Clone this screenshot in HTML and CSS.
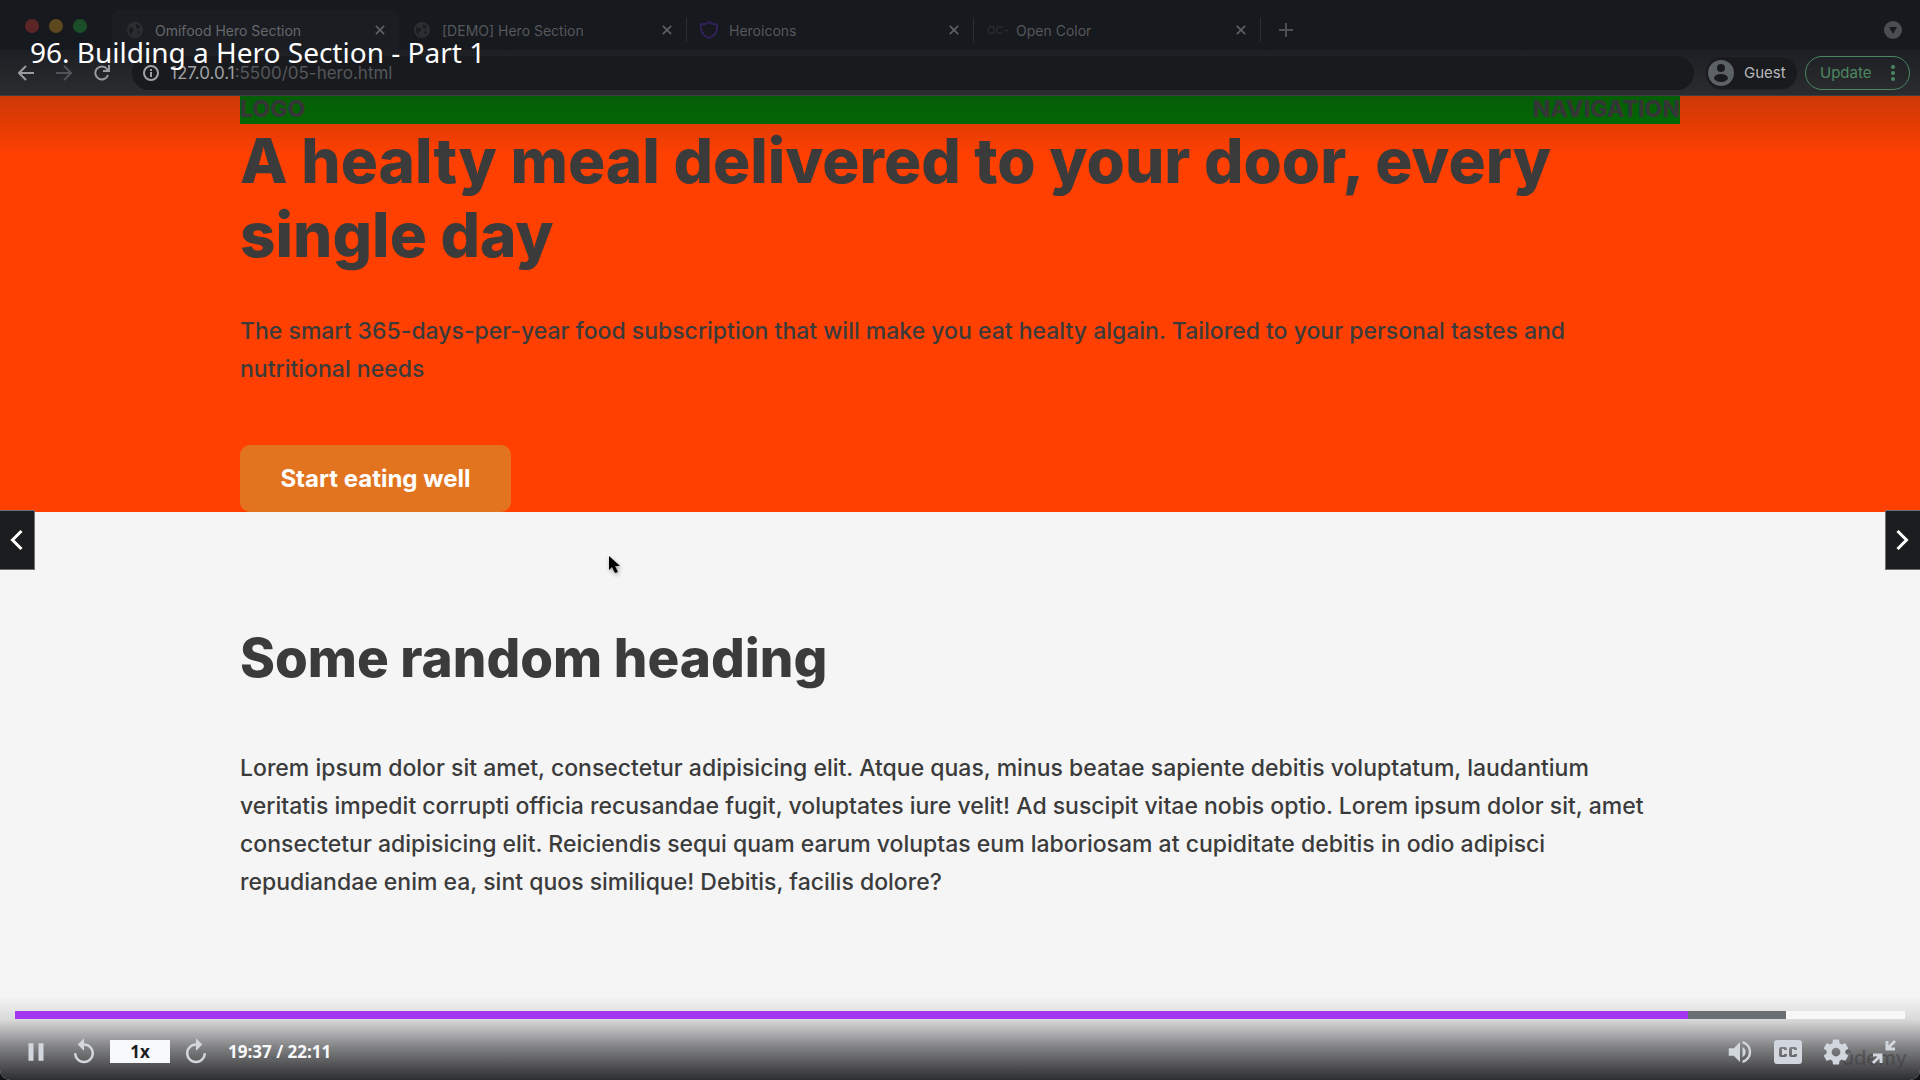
FILE: index.html
```html
<!DOCTYPE html>
<html lang="en">
<head>
<meta charset="utf-8">
<meta name="viewport" content="width=device-width, initial-scale=1">
<title>96. Building a Hero Section - Part 1</title>
<link rel="stylesheet" href="styles.css">
</head>
<body>
<div class="player">
  <div class="video">
    <div class="chrome">
      <div class="tabstrip">
        <div class="lights"><span class="light red"></span><span class="light yellow"></span><span class="light green"></span></div>
        <div class="tab active">
          <svg class="favicon" viewBox="0 0 18 18"><circle cx="9" cy="9" r="8" fill="#2b2d31"/><path d="M3 6l4 1 1 3-2 1v3L3 11zM10 3l4 2-1 3-3-1zM11 10l3 1-2 3z" fill="#1a1c20"/></svg>
          <span class="tab-title">Omifood Hero Section</span>
          <button class="close" aria-label="Close tab"><svg viewBox="0 0 12 12"><path d="M1 1l10 10M11 1L1 11"/></svg></button>
        </div>
        <div class="tab">
          <svg class="favicon" viewBox="0 0 18 18"><circle cx="9" cy="9" r="8" fill="#2b2d31"/><path d="M3 6l4 1 1 3-2 1v3L3 11zM10 3l4 2-1 3-3-1zM11 10l3 1-2 3z" fill="#1a1c20"/></svg>
          <span class="tab-title">[DEMO] Hero Section</span>
          <button class="close" aria-label="Close tab"><svg viewBox="0 0 12 12"><path d="M1 1l10 10M11 1L1 11"/></svg></button>
        </div>
        <div class="tab ruled">
          <svg class="favicon" viewBox="0 0 18 18"><path d="M9 1c2 1.600 4.500 2.300 8 2.500.6 6.500-2 11.500-8 13.500C3 15 .4 10 1 3.500 4.500 3.300 7 2.600 9 1z" fill="none" stroke="#31215a" stroke-width="2"/></svg>
          <span class="tab-title">Heroicons</span>
          <button class="close" aria-label="Close tab"><svg viewBox="0 0 12 12"><path d="M1 1l10 10M11 1L1 11"/></svg></button>
        </div>
        <div class="tab ruled">
          <span class="favicon oc">OC-</span>
          <span class="tab-title">Open Color</span>
          <button class="close" aria-label="Close tab"><svg viewBox="0 0 12 12"><path d="M1 1l10 10M11 1L1 11"/></svg></button>
        </div>
        <button class="new-tab ruled" aria-label="New tab"><svg viewBox="0 0 14 14"><path d="M7 0v14M0 7h14"/></svg></button>
        <button class="tab-menu" aria-label="Search tabs"><svg viewBox="0 0 18 18"><circle cx="9" cy="9" r="9"/><path d="M5 6h8l-4 7z"/></svg></button>
      </div>
      <div class="toolbar">
        <button class="tool" aria-label="Back"><svg viewBox="0 0 16 16"><path d="M16 8H1M8 1L1 8l7 7"/></svg></button>
        <button class="tool dim" aria-label="Forward"><svg viewBox="0 0 16 16"><path d="M0 8h15M8 1l7 7-7 7"/></svg></button>
        <button class="tool" aria-label="Reload"><svg viewBox="0 0 16 16"><path d="M14 10a6.500 6.500 0 1 1-1-6l2 2"/><path d="M15 0v6H9"/></svg></button>
        <div class="address">
          <svg class="info" viewBox="0 0 18 18"><circle cx="9" cy="9" r="7"/><path d="M9 8v5M9 5v2"/></svg>
          <span class="url"><b>127.0.0.1</b>:5500/05-hero.html</span>
        </div>
        <button class="guest"><svg viewBox="0 0 26 26"><circle cx="13" cy="13" r="13" fill="#5c6166"/><circle cx="13" cy="8" r="4" fill="#191a1e"/><ellipse cx="13" cy="18" rx="7" ry="4" fill="#191a1e"/></svg>Guest</button>
        <button class="update">Update<svg viewBox="0 0 4 16"><circle cx="2" cy="2" r="2"/><circle cx="2" cy="8" r="2"/><circle cx="2" cy="14" r="2"/></svg></button>
      </div>
    </div>
    <header class="hero">
      <nav class="site-nav"><span>LOGO</span><span>NAVIGATION</span></nav>
      <div class="container">
        <h1>A healty meal delivered to your door, every<br>single day</h1>
        <p>The smart 365-days-per-year food subscription that will make you eat healty algain. Tailored to your personal tastes and<br>nutritional needs</p>
        <a class="cta" href="#more">Start eating well</a>
      </div>
    </header>
    <section class="container more" id="more">
      <h2>Some random heading</h2>
      <p>Lorem ipsum dolor sit amet, consectetur adipisicing elit. Atque quas, minus beatae sapiente debitis voluptatum, laudantium<br>veritatis impedit corrupti officia recusandae fugit, voluptates iure velit! Ad suscipit vitae nobis optio. Lorem ipsum dolor sit, amet<br>consectetur adipisicing elit. Reiciendis sequi quam earum voluptas eum laboriosam at cupiditate debitis in odio adipisci<br>repudiandae enim ea, sint quos similique! Debitis, facilis dolore?</p>
    </section>
  </div>

  <div class="top-shade"></div>
  <div class="lecture-title">96. Building a Hero Section - Part 1</div>
  <svg class="cursor" viewBox="0 0 12 18"><path d="M0 0v14l3-3 3 6 3-1-3-6h5z"/></svg>
  <button class="step prev" aria-label="Previous lecture"><svg viewBox="0 0 12 20"><path d="M11 1L2 10l9 9"/></svg></button>
  <button class="step next" aria-label="Next lecture"><svg viewBox="0 0 12 20"><path d="M1 1l9 9-9 9"/></svg></button>

  <div class="controls">
    <div class="progress"><div class="buffered" style="width:93.700%"></div><div class="played" style="width:88.500%"></div></div>
    <div class="control-row">
      <button class="ctl" aria-label="Pause"><svg viewBox="0 0 24 24"><path d="M6 19h4V5H6zm8-14v14h4V5z"/></svg></button>
      <button class="ctl rewind" aria-label="Rewind"><svg viewBox="0 0 24 24"><path d="M12 5V1L7 6l5 5V7c3.310 0 6 2.690 6 6s-2.690 6-6 6-6-2.690-6-6H4c0 4.420 3.580 8 8 8s8-3.580 8-8-3.580-8-8-8z"/></svg></button>
      <button class="speed">1x</button>
      <button class="ctl" aria-label="Forward"><svg viewBox="0 0 24 24"><path d="M12 5V1l5 5-5 5V7c-3.310 0-6 2.690-6 6s2.690 6 6 6 6-2.690 6-6h2c0 4.420-3.580 8-8 8s-8-3.580-8-8 3.580-8 8-8z"/></svg></button>
      <span class="time">19:37 / 22:11</span>
      <div class="right-controls">
        <button class="ctl" aria-label="Volume"><svg viewBox="0 0 24 24"><path d="M3 9v6h4l5 5V4L7 9H3zm13.500 3A4.500 4.500 0 0 0 14 7.970v8.050A4.500 4.500 0 0 0 16.500 12zM14 3.230v2.060a7 7 0 0 1 0 13.420v2.060a9 9 0 0 0 0-17.540z"/></svg></button>
        <button class="ctl" aria-label="Captions"><svg viewBox="0 0 30 30"><path fill-rule="evenodd" d="M4 3h22q3 0 3 3v18q0 3-3 3H4q-3 0-3-3V6q0-3 3-3zm2 9v6q0 2 2 2h4q2 0 2-2v-1h-3v1H9v-6h2v1h3v-1q0-2-2-2H8q-2 0-2 2zm10 0v6q0 2 2 2h4q2 0 2-2v-1h-3v1h-2v-6h2v1h3v-1q0-2-2-2h-4q-2 0-2 2z"/></svg></button>
        <button class="ctl" aria-label="Settings"><svg viewBox="0 0 24 24"><path d="M19.430 12.980c.04-.32.070-.64.070-.98s-.03-.66-.07-.98l2.110-1.650c.19-.15.240-.42.120-.64l-2-3.460c-.12-.22-.39-.3-.61-.22l-2.490 1c-.52-.4-1.080-.73-1.690-.98l-.38-2.650A.488.488 0 0 0 14 2h-4c-.25 0-.46.180-.49.420l-.38 2.650c-.61.250-1.170.590-1.690.980l-2.490-1c-.23-.09-.49 0-.61.220l-2 3.460c-.13.220-.07.490.120.640l2.110 1.650c-.04.320-.07.650-.07.980s.03.660.070.980l-2.110 1.650c-.19.150-.24.420-.12.640l2 3.460c.12.220.390.300.610.220l2.490-1c.52.400 1.080.730 1.690.980l.38 2.650c.03.240.240.420.490.420h4c.25 0 .46-.18.490-.42l.38-2.650c.61-.25 1.170-.59 1.690-.98l2.490 1c.23.090.490 0 .61-.22l2-3.460c.12-.22.070-.49-.12-.64l-2.110-1.650zM12 15.500a3.500 3.500 0 1 1 0-7 3.500 3.500 0 0 1 0 7z"/></svg></button>
        <button class="ctl" aria-label="Exit full screen"><svg viewBox="0 0 30 30"><path d="M18 4v8h8M18 12L26 4M4 18h8v8M12 18L4 26" fill="none" stroke="#d1d7dc" stroke-width="3"/></svg></button>
      </div>
    </div>
    <span class="watermark">ûdemy</span>
  </div>
</div>
</body>
</html>
```
FILE: styles.css
```css
* { box-sizing: border-box; margin: 0; padding: 0; }
body { background: #101114; font-family: Inter, "Liberation Sans", sans-serif; }
button { background: none; border: 0; font: inherit; color: inherit; }
svg { display: block; }

.player { position: relative; min-height: 100vh; overflow: hidden; border-radius: 0 0 10px 10px; background: #f5f5f5; }

/* Browser window */
.chrome { color: #55585c; font-size: 14px; border-bottom: 1px solid #3c3e40; }
.tabstrip { display: flex; align-items: flex-end; height: 50px; background: #16191d; padding-right: 18px; }
.lights { display: flex; gap: 10px; width: 112px; height: 100%; padding: 19px 0 0 25px; flex: none; }
.light { width: 14px; height: 14px; border-radius: 50%; }
.red { background: #5c2626; }
.yellow { background: #5e4820; }
.green { background: #1b4e28; }
.tab { display: flex; align-items: center; flex: 0 1 287px; height: 40px; padding: 0 14px; gap: 11px; border-radius: 8px 8px 0 0; }
.tab.active { background: #1b1d22; color: #65686c; }
.ruled { border-radius: 0; background: linear-gradient(#2b2d31, #2b2d31) 0 50% / 1px 24px no-repeat; }
.favicon { width: 18px; height: 18px; flex: none; }
.oc { font-size: 11px; line-height: 18px; color: #2e3135; }
.tab-title { flex: 1; white-space: nowrap; }
.close svg { width: 10px; height: 10px; stroke: #5c5f63; stroke-width: 2; }
.new-tab { height: 40px; padding: 0 19px; }
.new-tab svg { width: 14px; height: 14px; stroke: #4c4f53; stroke-width: 2; }
.tab-menu { height: 40px; margin-left: auto; }
.tab-menu svg { width: 18px; height: 18px; fill: #4a4d51; }
.tab-menu path { fill: #16191d; }
.toolbar { display: flex; align-items: center; height: 45px; padding: 0 10px 0 18px; background: linear-gradient(#1c1f23, #2b2c30); }
.tool { width: 38px; flex: none; }
.tool svg { width: 16px; height: 16px; fill: none; stroke: #999b9d; stroke-width: 2; }
.tool.dim svg { stroke: #505357; }
.address { display: flex; align-items: center; flex: 1; height: 34px; gap: 10px; margin-right: 11px; padding: 0 10px; border-radius: 17px; background: #191a1e; font-size: 17px; }
.info { width: 18px; height: 18px; fill: none; stroke: #a0a2a4; stroke-width: 2; }
.url b { font-weight: 400; color: #a0a2a4; }
.guest { display: flex; align-items: center; gap: 10px; height: 34px; width: 93px; margin-right: 7px; padding: 0 2px; border: 1px solid #222428; border-radius: 17px; background: #191a1e; color: #b7b9bb; font-size: 15px; }
.guest svg { width: 26px; height: 26px; flex: none; }
.update { display: flex; align-items: center; justify-content: space-between; width: 105px; height: 34px; padding: 0 14px; border: 1px solid #4c8760; border-radius: 17px; color: #4c8760; font-size: 15px; }
.update svg { width: 4px; height: 16px; fill: #4c8760; }

/* Web page */
.hero { background: #ff4000; }
.container, .site-nav { width: 75%; margin: 0 auto; color: #3b3b3b; }
.container { white-space: nowrap; }
.site-nav { display: flex; justify-content: space-between; height: 28px; background: #007000; font-size: 23px; line-height: 26px; font-weight: 800; }
h1 { font-size: 62px; line-height: 74px; font-weight: 800; }
h2 { font-size: 53px; line-height: 60px; font-weight: 800; }
.container p { font-size: 23px; line-height: 38px; font-weight: 500; }
.hero p { margin: 40px 0 57px; }
.cta { display: block; width: 271px; border-radius: 10px; background: #e27420; color: #fff; font-size: 24px; line-height: 67px; font-weight: 700; text-align: center; text-decoration: none; }
.more { padding: 116px 0 166px; }
.more p { margin-top: 61px; }

/* Player overlay */
.top-shade { position: absolute; inset: 96px 0 auto; height: 60px; background: linear-gradient(rgba(24, 28, 32, .22), transparent); pointer-events: none; }
.lecture-title { position: absolute; left: 30px; top: 34px; color: #fff; font: 28px/36px "Noto Sans", sans-serif; }
.cursor { position: absolute; left: 609px; top: 556px; width: 12px; height: 18px; filter: drop-shadow(1px 2px 2px #999); }
.step { position: absolute; top: 510px; width: 35px; height: 60px; border: 1px solid #6a6f73; background: #1c1d1f; padding: 0 10px; }
.step svg { width: 13px; height: 20px; fill: none; stroke: #fff; stroke-width: 3; }
.prev { left: 0; border-left: 0; }
.next { right: 0; border-right: 0; }
.controls { position: absolute; inset: auto 0 0; height: 84px; padding: 15px 15px 0; background: linear-gradient(transparent, rgba(28, 29, 33, .13) 28%, rgba(28, 29, 33, .55) 62%, rgba(28, 29, 33, .92)); }
.progress { position: relative; height: 8px; background: #f7f7f7; }
.played, .buffered { position: absolute; inset: 0 auto 0 0; background: #a435f0; }
.buffered { background: #6a6f73; }
.control-row { display: flex; align-items: center; height: 65px; padding: 0 6px; }
.ctl svg { width: 30px; height: 30px; fill: #d1d7dc; }
.rewind { margin-left: 18px; }
.speed { width: 60px; height: 23px; margin: 0 11px; background: #f7f9fa; color: #1c1d1f; font: 700 17px/23px "Open Sans", sans-serif; }
.time { margin-left: 17px; color: #f7f9fa; font: 700 17px/24px "Open Sans", sans-serif; }
.right-controls { display: flex; gap: 18px; margin-left: auto; position: relative; z-index: 1; }
.watermark { position: absolute; right: 13px; bottom: 8px; color: rgba(60, 60, 64, .55); font-size: 20px; line-height: 28px; font-weight: 500; }
```
